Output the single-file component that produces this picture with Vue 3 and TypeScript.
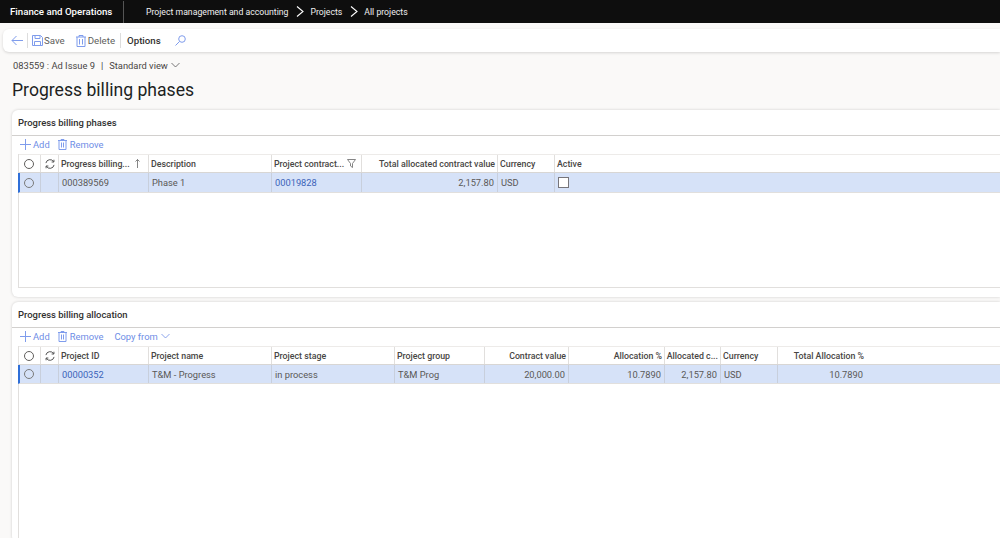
<script setup lang="ts">
interface Col { label: string; width: number; right?: boolean; link?: boolean; value: string; filter?: boolean; sort?: boolean; check?: boolean }
const cols1: Col[] = [
  { label: 'Progress billing...', width: 90, value: '000389569', sort: true },
  { label: 'Description', width: 123, value: 'Phase 1' },
  { label: 'Project contract...', width: 90, value: '00019828', link: true, filter: true },
  { label: 'Total allocated contract value', width: 136, value: '2,157.80', right: true },
  { label: 'Currency', width: 57, value: 'USD' },
  { label: 'Active', width: 446, value: '', check: true },
]
const cols2: Col[] = [
  { label: 'Project ID', width: 90, value: '00000352', link: true },
  { label: 'Project name', width: 123, value: 'T&M - Progress' },
  { label: 'Project stage', width: 123, value: 'in process' },
  { label: 'Project group', width: 90, value: 'T&M Prog' },
  { label: 'Contract value', width: 84, value: '20,000.00', right: true },
  { label: 'Allocation %', width: 96, value: '10.7890', right: true },
  { label: 'Allocated c...', width: 56, value: '2,157.80', right: true },
  { label: 'Currency', width: 57, value: 'USD' },
  { label: 'Total Allocation %', width: 88, value: '10.7890', right: true },
]
const cards = [
  { title: 'Progress billing phases', cols: cols1, copy: false, cls: 'first' },
  { title: 'Progress billing allocation', cols: cols2, copy: true, cls: 'second' },
]
</script>

<template>
  <div class="page">
    <header class="topbar">
      <span class="brand">Finance and Operations</span>
      <span class="crumbs">
        <span>Project management and accounting</span>
        <svg class="crumb-sep" width="8" height="11" viewBox="0 0 8 11"><path d="M1 .5 7 5.500 1 10.500" fill="none" stroke="#fff" stroke-width="1.1" /></svg>
        <span>Projects</span>
        <svg class="crumb-sep" width="8" height="11" viewBox="0 0 8 11"><path d="M1 .5 7 5.500 1 10.500" fill="none" stroke="#fff" stroke-width="1.1" /></svg>
        <span>All projects</span>
      </span>
    </header>

    <nav class="actions">
      <svg class="back" width="12" height="11" viewBox="0 0 12 11"><path d="M12 5.500H1M5.500 1 1 5.500 5.500 10" fill="none" stroke="#7f9cec" stroke-width="1" /></svg>
      <span class="divider"></span>
      <span class="action">
        <svg width="11" height="11" viewBox="0 0 11 11"><path d="M.5.500h8l2 2v8H.5zM3 .5v3h5V.5M2.500 10.500V6.500h6v4" fill="none" stroke="#7f9cec" stroke-width="1" /></svg>
        Save
      </span>
      <span class="action delete">
        <svg width="10" height="12" viewBox="0 0 10 12"><path d="M0 2h10M3 2V.5h4V2M1 2v9.500h8V2M3.500 4v5.500M6.500 4v5.500" fill="none" stroke="#7f9cec" stroke-width="1" /></svg>
        Delete
      </span>
      <span class="divider end"></span>
      <span class="options">Options</span>
      <svg class="search" width="11" height="11" viewBox="0 0 11 11"><circle cx="7" cy="4" r="3.300" fill="none" stroke="#7f9cec" /><path d="M4.500 6.500.5 10.500" stroke="#7f9cec" /></svg>
    </nav>

    <div class="subline">
      <span>083559 : Ad Issue 9</span>
      <span class="pipe">|</span>
      <span>Standard view</span>
      <svg width="9" height="6" viewBox="0 0 9 6"><path d="M.5 1 4.500 5 8.500 1" fill="none" stroke="#555" stroke-width=".8" /></svg>
    </div>
    <h1>Progress billing phases</h1>

    <section v-for="card in cards" :key="card.title" class="card" :class="card.cls">
      <h2>{{ card.title }}</h2>
      <div class="grid-tools">
        <span class="tool">
          <svg width="11" height="11" viewBox="0 0 11 11"><path d="M5.500 0v11M0 5.500h11" stroke="#7f9cec" /></svg>
          Add
        </span>
        <span class="tool">
          <svg width="9" height="11" viewBox="0 0 9 11"><path d="M0 1.500h9M3 1.500V.5h3v1M1 1.500v9h7v-9M3.500 3.500v5M5.500 3.500v5" fill="none" stroke="#7f9cec" /></svg>
          Remove
        </span>
        <span v-if="card.copy" class="tool copy">
          Copy from
          <svg width="9" height="6" viewBox="0 0 9 6"><path d="M.5 1 4.500 5 8.500 1" fill="none" stroke="#6e8de6" stroke-width=".8" /></svg>
        </span>
      </div>
      <div class="table">
        <div class="tr head">
          <span class="cell radio-cell"><i class="radio"></i></span>
          <span class="cell sync-cell">
            <svg width="10" height="10" viewBox="0 0 11 11"><path d="M1 4.500A4.600 4.600 0 0 1 9.500 3M10 6.500A4.600 4.600 0 0 1 1.500 8M9.800 .8v2.500H7.300M1.200 10.200V7.700h2.500" fill="none" stroke="#444" /></svg>
          </span>
          <span v-for="col in card.cols" :key="col.label" class="cell th" :class="{ right: col.right }" :style="{ width: col.width + 'px' }">
            <span>{{ col.label }}</span>
            <svg v-if="col.sort" class="sort" width="5" height="9" viewBox="0 0 5 9"><path d="M2.500 9V.5M.5 2.500l2-2 2 2" fill="none" stroke="#666" stroke-width=".8" /></svg>
            <svg v-if="col.filter" class="filter" width="9" height="9" viewBox="0 0 9 9"><path d="M.5.500h8L5.500 4.500v4l-2-1.500V4.500z" fill="none" stroke="#777" stroke-width=".9" /></svg>
          </span>
        </div>
        <div class="tr row">
          <span class="cell radio-cell"><i class="radio"></i></span>
          <span class="cell sync-cell"></span>
          <span v-for="col in card.cols" :key="col.label" class="cell td" :class="{ right: col.right, link: col.link }" :style="{ width: col.width + 'px' }">
            <i v-if="col.check" class="check"></i>
            <template v-else>{{ col.value }}</template>
          </span>
        </div>
      </div>
    </section>
  </div>
</template>

<style>
html, body { margin: 0; background: #faf9f8; }
</style>

<style scoped>
.page {
  width: 1000px;
  height: 538px;
  overflow: hidden;
  background: #faf9f8;
  font-family: Roboto, "Open Sans", sans-serif;
  color: #323130;
}
.topbar {
  height: 23px;
  background: #0e0e0e;
  color: #fff;
  display: flex;
  align-items: center;
  font-size: 8.700px;
}
.brand {
  width: 124px;
  box-sizing: border-box;
  padding-left: 10px;
  font-size: 9.700px;
  font-weight: 500;
  height: 22px;
  line-height: 22px;
  border-right: 1px solid #555;
  white-space: nowrap;
}
.crumbs {
  display: flex;
  align-items: center;
  padding-left: 22px;
  color: #f0f0f0;
  white-space: nowrap;
}
.crumb-sep { margin: 0 6px 0 8px; }
.actions {
  margin: 6px 0 0 3px;
  height: 23px;
  background: #fff;
  border-radius: 6px 0 0 6px;
  box-shadow: 0 1px 3px rgba(0, 0, 0, .15);
  display: flex;
  align-items: center;
  font-size: 9.700px;
  color: #605e5c;
}
.back { margin-left: 8px; }
.divider { width: 1px; height: 15px; background: #ddd; margin-left: 4px; }
.action { display: flex; align-items: center; gap: 1px; margin-left: 4px; white-space: nowrap; }
.delete { margin-left: 11px; gap: 2px; }
.divider.end { margin-left: 5px; }
.options { margin-left: 6px; color: #323130; font-weight: 500; }
.search { margin-left: 14px; }
.subline {
  margin: 7px 0 0 13px;
  height: 12px;
  display: flex;
  align-items: center;
  font-size: 9.350px;
  color: #484644;
  white-space: nowrap;
}
.pipe { margin: 0 6px; }
.subline svg { margin-left: 3px; }
h1 {
  margin: 7px 0 0 12px;
  height: 25px;
  font-size: 17.600px;
  line-height: 25px;
  font-weight: 400;
  color: #201f1e;
}
.card {
  margin-left: 12px;
  background: #fff;
  border-radius: 6px 0 0 6px;
  box-shadow: 0 0 3px rgba(0, 0, 0, .18);
  overflow: hidden;
  box-sizing: border-box;
}
.first { margin-top: 7px; height: 187px; }
.second { margin-top: 5px; height: 240px; }
h2 {
  margin: 0;
  height: 26px;
  padding-left: 6px;
  box-sizing: border-box;
  border-bottom: 1px solid #d2d0ce;
  font-size: 9.450px;
  line-height: 25px;
  font-weight: 500;
  color: #323130;
}
.grid-tools {
  height: 18px;
  padding: 0 0 2px 8px;
  box-sizing: border-box;
  display: flex;
  align-items: center;
  gap: 8px;
  font-size: 9.400px;
  color: #6e8de6;
  white-space: nowrap;
}
.tool { display: flex; align-items: center; gap: 2px; }
.tool + .tool svg:first-child { margin-right: 1px; }
.copy { margin-left: 3px; gap: 3px; }
.table {
  margin-left: 6px;
  height: 134px;
  border: 1px solid #e1dfdd;
  border-right: 0;
  border-top: 0;
  box-sizing: border-box;
}
.second .table { height: 200px; }
.tr { display: flex; font-size: 8.800px; white-space: nowrap; }
.head { border-top: 1px solid #edebe9; border-bottom: 1px solid #d8d6d4; box-sizing: border-box; height: 19px; }
.row { height: 20px; box-sizing: border-box; background: #d6e2f8; border-left: 2px solid #2f6fd8; margin-left: -1px; border-bottom: 1px solid #e1dfdd; }
.second .row { height: 19px; }
.cell {
  box-sizing: border-box;
  border-right: 1px solid #e1dfdd;
  display: flex;
  align-items: center;
  flex: none;
  padding: 0 3px;
  overflow: hidden;
}
.cell:last-child { border-right: 0; }
.row .cell { border-right-color: #c8cfdc; }
.radio-cell { width: 22px; justify-content: center; padding: 0 2px 0 0; }
.row .radio-cell { width: 21px; }
.sync-cell { width: 18px; justify-content: center; padding: 0; }
.th { font-weight: 500; color: #484644; padding: 0 2px; }
.td { font-size: 9.300px; color: #5a5856; }
.right { justify-content: flex-end; }
.td.link { color: #3b63b8; }
.radio {
  width: 8px;
  height: 8px;
  border: 1px solid #605e5c;
  border-radius: 50%;
  display: block;
}
.row .radio { border-color: #7a7a7a; }
.sort { margin-left: auto; margin-right: 6px; }
.filter { margin-left: auto; margin-right: 3px; }
.check {
  width: 9px;
  height: 9px;
  background: #fff;
  border: 1px solid #77757a;
  display: block;
}
</style>
